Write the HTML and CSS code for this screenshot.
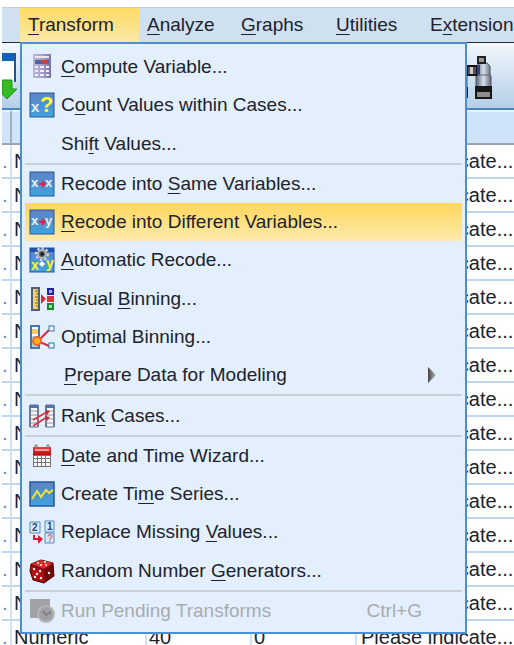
FILE: index.html
```html
<!DOCTYPE html>
<html lang="en">
<head>
<meta charset="utf-8">
<title>Data Editor</title>
<link rel="stylesheet" href="styles.css">
</head>
<body>
<div class="app">
  <nav class="menubar">
    <span class="tab-rest"></span>
    <div class="tab-wrap">
      <button class="tab tab-open" aria-expanded="true"><u>T</u>ransform</button>
      <div class="menu">
        <button class="item"><span class="icon"><svg viewBox="0 0 26 26">
          <defs><linearGradient id="calc" x1="0" x2="1"><stop offset="0" stop-color="#b9b5dc"/><stop offset=".5" stop-color="#a6a2cc"/><stop offset="1" stop-color="#77739f"/></linearGradient>
          <linearGradient id="blue" x2="0" y2="1"><stop offset="0" stop-color="#5f83c4"/><stop offset="1" stop-color="#3fa3dc"/></linearGradient></defs>
          <rect x="4" y="0" width="18" height="24" rx="1" fill="url(#calc)"/><rect x="6" y="2" width="14" height="2" fill="#f3e6dc"/><rect x="6" y="6" width="14" height="4" fill="#53629c"/><rect x="13" y="6" width="6" height="4" fill="#d33d38"/>
          <path d="M6 12h3v2H6zM11 12h4v2h-4zM17 12h3v2h-3zM6 16h3v2H6zM11 16h4v2h-4zM17 16h3v2h-3zM6 20h3v2H6zM11 20h4v2h-4zM17 20h3v2h-3z" fill="#f2f0fa"/></svg></span><span><u>C</u>ompute Variable...</span></button>
        <button class="item"><span class="icon"><svg viewBox="0 0 26 26"><rect x="1" y="1" width="24" height="24" fill="url(#blue)" stroke="#2457a0"/><text x="2" y="20" class="glyph" font-size="15" fill="#e6edf5">x</text><text x="11" y="20" class="glyph" font-size="22" fill="#ffff32">?</text></svg></span><span>C<u>o</u>unt Values within Cases...</span></button>
        <button class="item"><span class="icon"></span><span>Shi<u>f</u>t Values...</span></button>
        <hr>
        <button class="item"><span class="icon"><svg viewBox="0 0 26 26"><rect x="1" y="1" width="24" height="24" fill="url(#blue)" stroke="#2457a0"/><text x="2" y="16" class="glyph" font-size="13" fill="#e8eef5">x</text><text x="16" y="16" class="glyph" font-size="13" fill="#e8eef5">x</text><path d="M10 12h3V9l4 4-4 4v-3h-3z" fill="#d6244b"/></svg></span><span>Recode into <u>S</u>ame Variables...</span></button>
        <button class="item item-active"><span class="icon"><svg viewBox="0 0 26 26"><rect x="1" y="1" width="24" height="24" fill="url(#blue)" stroke="#2457a0"/><text x="2" y="16" class="glyph" font-size="13" fill="#e8eef5">x</text><text x="16" y="16" class="glyph" font-size="13" fill="#e8eef5">y</text><path d="M10 12h3V9l4 4-4 4v-3h-3z" fill="#d6244b"/></svg></span><span><u>R</u>ecode into Different Variables...</span></button>
        <button class="item"><span class="icon"><svg viewBox="0 0 26 26"><rect x="1" y="1" width="24" height="24" fill="url(#blue)" stroke="#1d55b0"/><path d="M1 1h24v4H1z" fill="#1d4fab"/><circle cx="13" cy="7" r="6" fill="none" stroke="#d5d7d8" stroke-width="2" stroke-dasharray="2.5 2"/><circle cx="13" cy="7" r="4" fill="#555b62" stroke="#b5b9ba" stroke-width="2"/><circle cx="13" cy="7" r="1.5" fill="#111"/><text x="2" y="23" class="glyph" font-size="14" fill="#fff52d">x</text><text x="17" y="21" class="glyph" font-size="14" fill="#fff52d">y</text><path d="M13 14l3 3-3 3-3-3z" fill="#fff"/></svg></span><span><u>A</u>utomatic Recode...</span></button>
        <button class="item"><span class="icon"><svg viewBox="0 0 26 26"><rect x="3" y="2" width="7" height="22" fill="#f2d368" stroke="#555e77" stroke-width="2"/><path d="M6 5h3M7 8h2M6 11h3M7 14h2M6 17h3M7 20h2" stroke="#80652b"/><path d="M12 8l5 5-5 5z" fill="#d72d35"/><path d="M18 10h7v6h-7z" fill="#d9363b"/><rect x="19" y="3" width="5" height="5" fill="#a9b2ef" stroke="#2121a2" stroke-width="2"/><rect x="19" y="18" width="5" height="5" fill="#a6dfa8" stroke="#158926" stroke-width="2"/></svg></span><span>Visual <u>B</u>inning...</span></button>
        <button class="item"><span class="icon"><svg viewBox="0 0 26 26"><rect x="2" y="2" width="8" height="22" fill="#fff" stroke="#4b74a8" stroke-width="2"/><path d="M3 5h6v5H3z" fill="#f7d14e"/><path d="M3 12h6v3H3zM3 18h6v5H3z" fill="#b7cbe1"/><path d="M9 17L20 6M9 17l11 5" stroke="#e52746" stroke-width="2"/><circle cx="8" cy="17" r="5" fill="#ee6a2b"/><circle cx="8" cy="17" r="3" fill="#ffb31e"/><rect x="20" y="2" width="5" height="5" fill="#eef8ff" stroke="#2f74b0"/><rect x="20" y="19" width="5" height="5" fill="#eef8ff" stroke="#2f74b0"/></svg></span><span>Opt<u>i</u>mal Binning...</span></button>
        <button class="item item-sub"><span class="icon"></span><span><u>P</u>repare Data for Modeling</span><svg class="arrow" viewBox="0 0 8 16"><defs><linearGradient id="arr"><stop offset="0" stop-color="#454545"/><stop offset="1" stop-color="#b4b9bf"/></linearGradient></defs><path d="M0 0l8 8-8 8z" fill="url(#arr)"/></svg></button>
        <hr>
        <button class="item"><span class="icon"><svg viewBox="0 0 26 26"><path d="M1 2h8v22H1zM17 2h8v22h-8z" fill="#f7f8f9" stroke="#596b9b" stroke-width="1"/><path d="M1 2h8v3H1zM17 2h8v3h-8z" fill="#5870ad"/><path d="M2 8h7M2 12h7M2 16h7M2 20h7M18 8h7M18 12h7M18 16h7M18 20h7" stroke="#8b929d"/><path d="M1 2v22M25 2v22M9 2v22M17 2v22" stroke="#596b9b" stroke-width="1.5"/><path d="M4 17L18 9M4 23l14-9" stroke="#d43a46" stroke-width="2"/><path d="M16 7l5 1-3 4zM16 13l5 1-3 4z" fill="#c72b36"/></svg></span><span>Ran<u>k</u> Cases...</span></button>
        <hr>
        <button class="item"><span class="icon"><svg viewBox="0 0 26 26"><defs><linearGradient id="red" x2="0" y2="1"><stop offset="0" stop-color="#d44a48"/><stop offset="1" stop-color="#c80808"/></linearGradient></defs><path d="M4 12h18v12H4z" fill="#77736f"/><path d="M5 13h3v2H5zM9 13h3v2H9zM13 13h3v2h-3zM17 13h4v2h-4zM5 16h3v3H5zM9 16h3v3H9zM13 16h3v3h-3zM17 16h4v3h-4zM5 20h3v3H5zM9 20h3v3H9zM13 20h3v3h-3zM17 20h4v3h-4z" fill="#fafafa"/><path d="M4 4h18v8H4z" fill="url(#red)"/><path d="M6 6h14v2H6z" fill="#eda19b"/><path d="M6 5V2h2v3M18 5V2h2v3" fill="none" stroke="#78726f"/></svg></span><span><u>D</u>ate and Time Wizard...</span></button>
        <button class="item"><span class="icon"><svg viewBox="0 0 26 26"><rect x="1" y="1" width="24" height="24" fill="url(#blue)" stroke="#2459a1" stroke-width="1.5"/><path d="M3 18l5-8 4 6 5-7 3 3 4-3" fill="none" stroke="#efe832" stroke-width="2"/></svg></span><span>Create Ti<u>m</u>e Series...</span></button>
        <button class="item"><span class="icon"><svg viewBox="0 0 26 26"><path d="M1 3h10v11H1zM16 2h9v11h-9zM16 14h9v10h-9z" fill="#d5edff" stroke="#548ac1"/><text x="3" y="12" class="glyph" font-size="10" fill="#2d4776">2</text><text x="18" y="11" class="glyph" font-size="10" fill="#2d4776">1</text><text x="18" y="23" class="glyph" font-size="10" fill="#e16879">?</text><path d="M5 16v4h5" fill="none" stroke="#db1633" stroke-width="2"/><path d="M9 16l5 4-5 5z" fill="#db1633"/></svg></span><span>Replace Missing <u>V</u>alues...</span></button>
        <button class="item"><span class="icon"><svg viewBox="0 0 26 26"><path d="M2 6l10-4 12 3 1 13-10 7-11-3-3-9z" fill="#750609" stroke="#500306"/><path d="M2 6l10-4 12 3-9 6z" fill="#dc2c29"/><path d="M1 8l13 4 1 12-11-3z" fill="#b60d12"/><g fill="#fff2ef"><circle cx="9" cy="5" r="1"/><circle cx="16" cy="4" r="1"/><circle cx="12" cy="7" r="1"/><circle cx="17" cy="7" r="1"/><circle cx="5" cy="11" r="1.2"/><circle cx="11" cy="13" r="1.2"/><circle cx="8" cy="16" r="1.2"/><circle cx="6" cy="19" r="1.2"/><circle cx="12" cy="20" r="1.2"/><circle cx="20" cy="15" r="1.2"/></g></svg></span><span>Random Number <u>G</u>enerators...</span></button>
        <hr>
        <button class="item" disabled><span class="icon"><svg viewBox="0 0 26 26"><path d="M1 1h20v19H1z" fill="#a0a2a5"/><circle cx="17" cy="16" r="8" fill="#9fa1a4" stroke="#b5b7ba" stroke-width="2"/><path d="M14 13l3 4 5-3" fill="none" stroke="#7d8084" stroke-width="2"/></svg></span><span>Run Pending Transforms</span><span class="shortcut">Ctrl+G</span></button>
      </div>
    </div>
    <button class="tab"><u>A</u>nalyze</button>
    <button class="tab"><u>G</u>raphs</button>
    <button class="tab"><u>U</u>tilities</button>
    <button class="tab">E<u>x</u>tensions</button>
  </nav>
  <div class="toolbar">
    <svg class="tool-import" viewBox="0 0 16 48"><path d="M0 1h13v28H0z" fill="#fff"/><path d="M0 0h14v8H0z" fill="#1262bd"/><path d="M13 1v28" stroke="#245391" stroke-width="2"/><path d="M0 27h10v9h5L5 46l-5-5V27z" fill="#35bd20" stroke="#298c20"/></svg>
    <svg class="tool-find" viewBox="0 0 50 44"><defs><linearGradient id="tube"><stop offset="0" stop-color="#59657b"/><stop offset=".5" stop-color="#d5e0ea"/><stop offset="1" stop-color="#616a78"/></linearGradient></defs>
      <path d="M7 7h10v6l4 7v11H1V19l4-9z" fill="url(#tube)" stroke="#4c5667"/>
      <path d="M7 1h9v6H7z" fill="#777" stroke="#111" stroke-width="2"/>
      <path d="M1 31h21v11H1z" fill="#171717"/><path d="M18 1h3v41h-3z" fill="#252a33"/>
      <path d="M32 7h9l3 3v9l1 1v12H30V20l1-2z" fill="url(#tube)" stroke="#4c5667"/>
      <path d="M32 1h7v6h-7z" fill="#999" stroke="#222" stroke-width="2"/>
      <path d="M21 10h10v9H21z" fill="#555" stroke="#111" stroke-width="2"/><path d="M24 11h3v7h-3z" fill="#c9c9c9"/>
      <path d="M31 9h3v10h-3z" fill="#3b3a9b"/>
      <path d="M31 19h14" stroke="#5c6677"/>
      <path d="M30 31h15v11H30z" fill="#8d8d8d" stroke="#171717" stroke-width="2"/><path d="M30 31h15v5H30z" fill="#171717"/></svg>
  </div>
  <table class="grid">
    <colgroup><col class="c-edge"><col class="c-type"><col class="c-width"><col class="c-dec"><col></colgroup>
    <thead><tr><th></th><th></th><th></th><th></th><th></th></tr></thead>
    <tbody>
      <tr><td>.</td><td>Numeric</td><td>40</td><td>0</td><td>Please indicate...</td></tr>
      <tr><td>.</td><td>Numeric</td><td>40</td><td>0</td><td>Please indicate...</td></tr>
      <tr><td>.</td><td>Numeric</td><td>40</td><td>0</td><td>Please indicate...</td></tr>
      <tr><td>.</td><td>Numeric</td><td>40</td><td>0</td><td>Please indicate...</td></tr>
      <tr><td>.</td><td>Numeric</td><td>40</td><td>0</td><td>Please indicate...</td></tr>
      <tr><td>.</td><td>Numeric</td><td>40</td><td>0</td><td>Please indicate...</td></tr>
      <tr><td>.</td><td>Numeric</td><td>40</td><td>0</td><td>Please indicate...</td></tr>
      <tr><td>.</td><td>Numeric</td><td>40</td><td>0</td><td>Please indicate...</td></tr>
      <tr><td>.</td><td>Numeric</td><td>40</td><td>0</td><td>Please indicate...</td></tr>
      <tr><td>.</td><td>Numeric</td><td>40</td><td>0</td><td>Please indicate...</td></tr>
      <tr><td>.</td><td>Numeric</td><td>40</td><td>0</td><td>Please indicate...</td></tr>
      <tr><td>.</td><td>Numeric</td><td>40</td><td>0</td><td>Please indicate...</td></tr>
      <tr><td>.</td><td>Numeric</td><td>40</td><td>0</td><td>Please indicate...</td></tr>
      <tr><td>.</td><td>Numeric</td><td>40</td><td>0</td><td>Please indicate...</td></tr>
      <tr><td>.</td><td>Numeric</td><td>40</td><td>0</td><td>Please indicate...</td></tr>
    </tbody>
  </table>
</div>
</body>
</html>
```
FILE: styles.css
```css
* { box-sizing: border-box; }

body {
  margin: 0;
  background: #fff;
  color: #20222c;
  font-family: "Liberation Sans", Arial, sans-serif;
  font-size: 19px;
}

.app {
  height: 100vh;
  padding: 7px 0 0 2px;
  overflow: hidden;
}

button {
  margin: 0;
  border: 0;
  background: none;
  color: inherit;
  font: inherit;
  text-align: left;
  white-space: nowrap;
}

u {
  text-decoration-thickness: 1px;
  text-underline-offset: 3px;
}

.menubar {
  display: grid;
  grid-template-columns: 18px 119px 94px 95px 94px 1fr;
  height: 36px;
  background: #cfe0f0;
  border-top: 1px solid #c3ccd5;
  border-bottom: 1px solid #222b33;
}

.tab-wrap { position: relative; }

.tab {
  height: 34px;
  padding: 0 8px;
  overflow: hidden;
}

.tab-open {
  width: 100%;
  background: linear-gradient(#ffda64, #fde9a8);
}

.menu {
  position: absolute;
  z-index: 2;
  top: 100%;
  left: 0;
  display: flex;
  flex-direction: column;
  width: 447px;
  min-height: 592px;
  padding: 4px 3px 2px;
  background: #e3effc;
  border: 2px solid #4a8fd0;
}

.item {
  display: flex;
  flex: 1 0 38px;
  align-items: center;
  gap: 6px;
  padding: 0 4px;
}

.item-active { background: linear-gradient(#ffd75a, #fee9ae); }
.item:disabled { color: #a8abb0; }
.item-sub { gap: 9px; }

.menu hr {
  width: 100%;
  height: 2px;
  margin: 0;
  border: 0;
  background: #cbd0d6;
}

.icon {
  flex: none;
  width: 26px;
  height: 26px;
}

.icon svg {
  display: block;
  width: 26px;
  height: 26px;
}

.glyph {
  font-family: "Liberation Sans", Arial, sans-serif;
  font-weight: bold;
}

.arrow {
  width: 8px;
  height: 16px;
  margin: 0 22px 0 auto;
}

.shortcut { margin: 0 36px 0 auto; }

.toolbar {
  display: flex;
  align-items: flex-start;
  height: 67px;
  padding-top: 10px;
  background: linear-gradient(#f2f7fd, #b5cfe8);
  border-bottom: 2px solid #4a86c0;
}

.tool-import {
  width: 16px;
  height: 48px;
}

.tool-find {
  width: 50px;
  height: 44px;
  margin: 3px 0 0 428px;
}

.grid {
  width: 100%;
  table-layout: fixed;
  border-collapse: separate;
  border-spacing: 0;
  font-size: 20px;
  line-height: 32px;
}

.c-edge { width: 10px; }
.c-type { width: 135px; }
.c-width { width: 105px; }
.c-dec { width: 105px; }

th {
  height: 35px;
  padding: 0;
  background: #cfe3fb;
  border-top: 2px solid #e9f1fa;
  border-right: 2px solid #a4afbc;
  border-bottom: 2px solid #98a4b2;
}

td {
  height: 34px;
  padding: 0 2px;
  overflow: hidden;
  white-space: nowrap;
  border-right: 2px solid #d3e2f2;
  border-bottom: 2px solid #bfd6ec;
}

td:first-child {
  padding: 0;
  color: #4f91cf;
}

td:last-child { padding: 0 4px; }

th:last-child,
td:last-child { border-right: 0; }
```
